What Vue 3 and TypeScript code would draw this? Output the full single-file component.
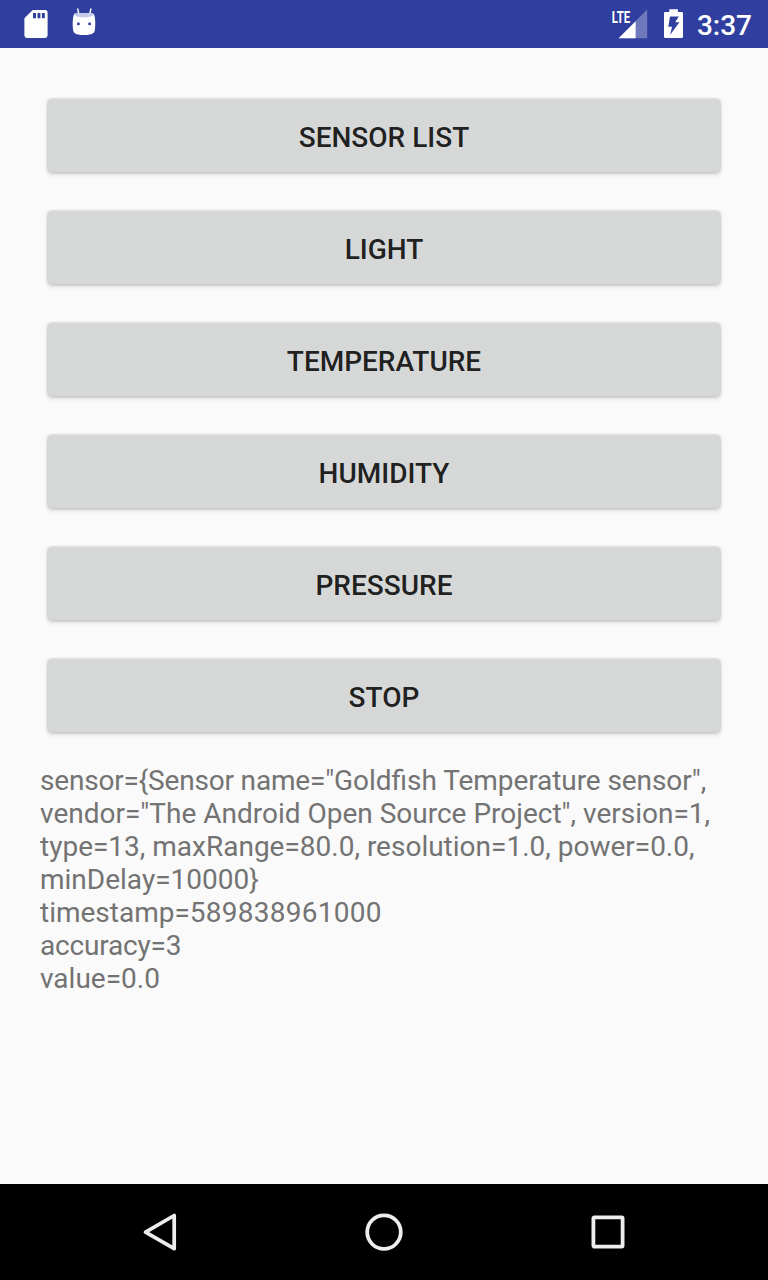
<script setup lang="ts">
type Tracking = 'normal' | 'snug' | 'tight' | 'wide'

interface Segment {
  text: string
  tracking: Tracking
}

const actions: string[] = ['Sensor list', 'Light', 'Temperature', 'Humidity', 'Pressure', 'Stop']

const reading: Segment[][] = [
  [
    { text: 'sensor={Sensor name="', tracking: 'tight' },
    { text: 'Goldfish', tracking: 'normal' },
    { text: ' Temperature sensor",', tracking: 'snug' },
  ],
  [{ text: 'vendor="The Android Open Source Project", version=1,', tracking: 'normal' }],
  [{ text: 'type=13, maxRange=80.0, resolution=1.0, power=0.0,', tracking: 'normal' }],
  [{ text: 'minDelay=10000}', tracking: 'normal' }],
  [
    { text: 'timestamp=', tracking: 'normal' },
    { text: '589838961000', tracking: 'wide' },
  ],
  [{ text: 'accuracy=3', tracking: 'tight' }],
  [{ text: 'value=0.0', tracking: 'normal' }],
]
</script>

<template>
  <div class="screen">
    <header class="status-bar">
      <div class="notifications">
        <svg class="status-icon" width="24" height="48" viewBox="0 0 24 48">
          <path
            fill="#fff"
            fill-rule="evenodd"
            d="M8.7 10H21.2Q23.6 10 23.6 12.4V35.6Q23.6 38 21.2 38H2.8Q.4 38 .4 35.6V18.3ZM9 13V18.3H12V13ZM13.5 13V18.3H16.4V13ZM17.9 13V18.3H20.8V13Z"
          />
        </svg>
        <svg class="status-icon" width="24" height="48" viewBox="0 0 24 48">
          <path d="M5.8 9L7 15M18.9 9L17.5 15" stroke="#fff" stroke-width="1.4" stroke-linecap="round" />
          <path
            fill="#fff"
            d="M2.2 14C4.7 12.8 19.3 12.8 21.8 14C23.6 17 23.6 27 22.6 31.2C21.4 36.4 2.6 36.4 1.4 31.2C.4 27 .4 17 2.2 14Z"
          />
          <path fill="#c5cae9" d="M2.6 13.8C5.5 12.7 18.5 12.7 21.4 13.8C23 18.6 1 18.6 2.6 13.8Z" />
          <circle cx="6.4" cy="23.9" r="1.45" fill="#303f9f" />
          <circle cx="17.6" cy="23.9" r="1.45" fill="#303f9f" />
        </svg>
      </div>
      <div class="system">
        <svg class="status-icon" width="38" height="48" viewBox="0 0 38 48">
          <path fill="#fff" fill-opacity=".3" d="M37.2 9.6V38.2H8.6Z" />
          <path fill="#fff" d="M25.6 21.2V38.2H8.6Z" />
          <text class="network" x="1.8" y="22.6" textLength="18.4" lengthAdjust="spacingAndGlyphs">LTE</text>
        </svg>
        <svg class="status-icon battery" width="20" height="48" viewBox="0 0 20 48">
          <path
            fill="#fff"
            fill-rule="evenodd"
            d="M5.3 9.2H13.9V12H17.7Q19 12 19 13.3V36.7Q19 38 17.7 38H1.3Q0 38 0 36.7V13.3Q0 12 1.3 12H5.3ZM6 16.6L4.3 26.8H8L6.2 34.7L15.4 22.2H11.2L14.8 16.6Z"
          />
        </svg>
        <span class="clock">3:37</span>
      </div>
    </header>

    <main class="content">
      <div class="actions">
        <button v-for="action in actions" :key="action" type="button" class="action">{{ action }}</button>
      </div>
      <div class="reading">
        <div v-for="(line, index) in reading" :key="index"><span v-for="segment in line" :key="segment.text" :class="segment.tracking">{{ segment.text }}</span></div>
      </div>
    </main>

    <nav class="nav-bar">
      <svg width="48" height="48" viewBox="0 0 48 48">
        <path d="M38.2 7.5V40.7L9.5 24.1Z" fill="none" stroke="#eceeed" stroke-width="3.7" stroke-linejoin="round" />
      </svg>
      <svg width="48" height="48" viewBox="0 0 48 48">
        <circle cx="24" cy="24.1" r="16.8" fill="none" stroke="#eceeed" stroke-width="3.8" />
      </svg>
      <svg width="48" height="48" viewBox="0 0 48 48">
        <rect x="9.4" y="9.4" width="29.2" height="29.2" rx="1" fill="none" stroke="#eceeed" stroke-width="3.8" />
      </svg>
    </nav>
  </div>
</template>

<style>
body {
  margin: 0;
}
</style>

<style scoped>
.screen {
  display: flex;
  flex-direction: column;
  width: 768px;
  height: 1280px;
  background: #fafafa;
  font-family: Roboto, sans-serif;
}

.status-bar {
  display: flex;
  flex: none;
  justify-content: space-between;
  height: 48px;
  padding: 0 16px 0 24px;
  background: #303f9f;
  color: #fff;
}

.notifications {
  display: flex;
  gap: 24px;
}

.system {
  display: flex;
}

.status-icon {
  display: block;
}

.network {
  fill: #fff;
  font-size: 17.2px;
  font-weight: 700;
}

.battery {
  margin: 0 13px 0 16px;
}

.clock {
  font-size: 28px;
  font-weight: 500;
  line-height: 52px;
}

.content {
  flex: 1;
  padding: 51px 40px 0;
}

.actions {
  display: flex;
  flex-direction: column;
  gap: 39px;
  padding: 0 8px;
}

.action {
  height: 73px;
  padding: 4px 0 0;
  border: 0;
  border-radius: 4px;
  background: #d6d8d7;
  box-shadow: 0 2px 4px rgba(0, 0, 0, 0.18), 0 0 3px rgba(0, 0, 0, 0.2);
  color: rgba(0, 0, 0, 0.87);
  font-family: inherit;
  font-size: 28px;
  font-weight: 500;
  text-transform: uppercase;
}

.reading {
  margin-top: 32px;
  color: #737373;
  font-size: 28px;
  line-height: 33px;
  white-space: pre;
}

.snug {
  letter-spacing: -0.08px;
}

.tight {
  letter-spacing: -0.18px;
}

.wide {
  letter-spacing: 0.25px;
}

.nav-bar {
  display: flex;
  flex: none;
  align-items: center;
  justify-content: center;
  gap: 176px;
  height: 96px;
  background: #000;
}
</style>
